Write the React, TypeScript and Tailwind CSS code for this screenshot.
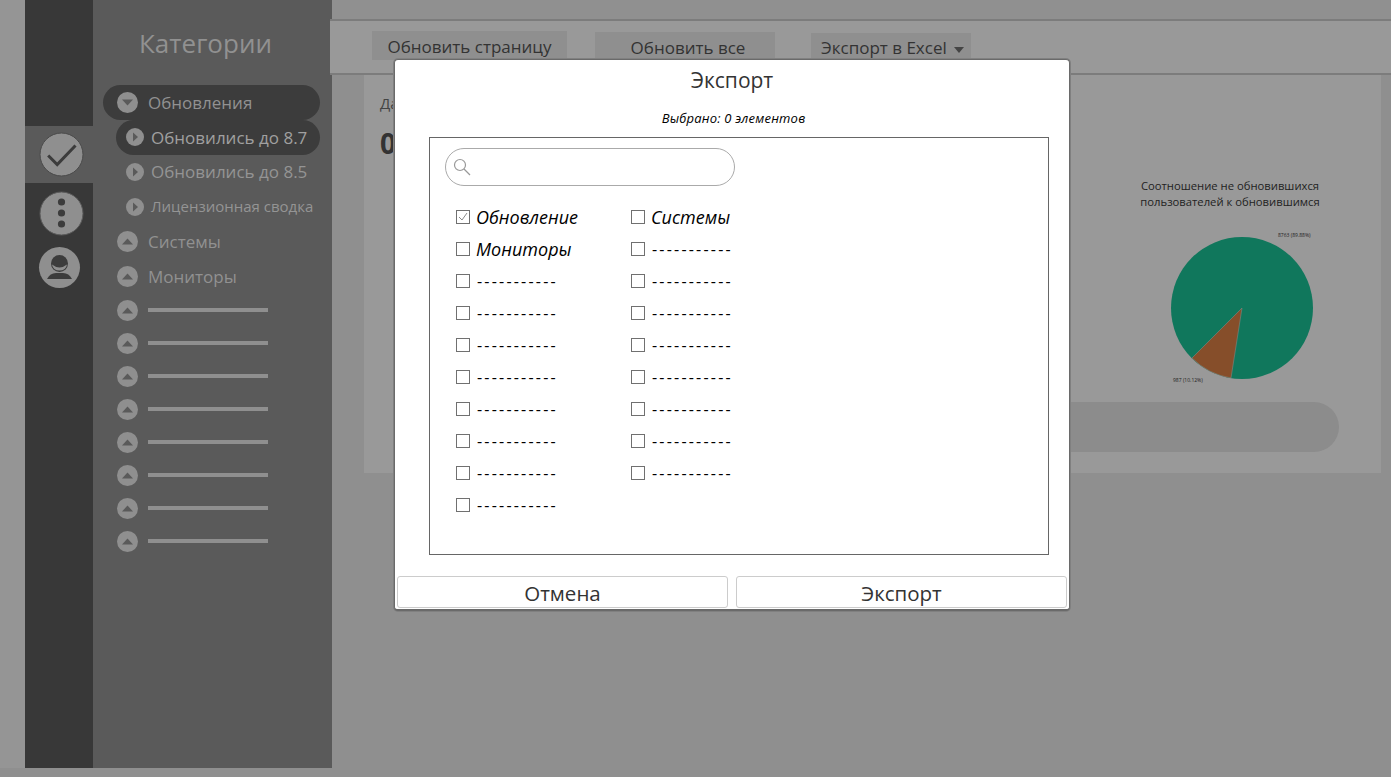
const font = { fontFamily: '"Open Sans", "Noto Sans", sans-serif' };

function Circle({ size, dir }: { size: number; dir: "up" | "down" | "right" }) {
  const r = size / 2;
  const points =
    dir === "up"
      ? `${r - 5.5},${r + 3} ${r + 5.5},${r + 3} ${r},${r - 3}`
      : dir === "down"
      ? `${r - 5.5},${r - 3} ${r + 5.5},${r - 3} ${r},${r + 3}`
      : `${r - 2},${r - 4.5} ${r - 2},${r + 4.5} ${r + 3},${r}`;
  return (
    <svg width={size} height={size} className="shrink-0">
      <circle cx={r} cy={r} r={r} fill="#8f8f8f" />
      <polygon points={points} fill="#5a5a5a" />
    </svg>
  );
}

function SideRow({ label, open }: { label: string; open?: boolean }) {
  return (
    <div className={`flex items-center h-[34.75px] w-[217px] pl-[14px] gap-[10px] rounded-full text-[17px] ${open ? "bg-[#3c3c3c]" : ""}`}>
      <Circle size={21} dir={open ? "down" : "up"} />
      <span className="text-[#919191] leading-none">{label}</span>
    </div>
  );
}

function SubRow({ label, active, small }: { label: string; active?: boolean; small?: boolean }) {
  return (
    <div className={`flex items-center h-[34.75px] w-[204px] ml-[13px] pl-[10px] gap-[7px] rounded-full ${small ? "text-[15px]" : "text-[17px]"} ${active ? "bg-[#3c3c3c]" : ""}`}>
      <Circle size={18} dir="right" />
      <span className={`leading-none whitespace-nowrap ${active ? "text-[#a0a0a0]" : "text-[#949494]"}`}>{label}</span>
    </div>
  );
}

function LineRow() {
  return (
    <div className="flex items-center h-[33px] w-[217px] pl-[14px] gap-[10px]">
      <Circle size={21} dir="up" />
      <div className="w-[120px] h-[4px] bg-[#8f8f8f]" />
    </div>
  );
}

function Rail() {
  return (
    <div className="w-[68px] h-full bg-[#383838] flex flex-col pt-[126px]">
      <div className="h-[57px] bg-[#5a5a5a] flex items-center justify-center pl-[4px]">
        <svg width="45" height="45" viewBox="0 0 45 45">
          <circle cx="22.5" cy="22.5" r="21.5" fill="#8f8f8f" stroke="#4a4a4a" strokeWidth="1" />
          <path d="M9.2 23.5l9 9 18.3-19" fill="none" stroke="#3c3c3c" strokeWidth="3" />
        </svg>
      </div>
      <div className="h-[60px] flex items-center justify-center pl-[4px]">
        <svg width="45" height="45" viewBox="0 0 45 45">
          <circle cx="22.5" cy="22.5" r="21.5" fill="#8f8f8f" stroke="#5a5a5a" strokeWidth="1" />
          <circle cx="22.5" cy="11" r="3.6" fill="#3c3c3c" />
          <circle cx="22.5" cy="22" r="3.6" fill="#3c3c3c" />
          <circle cx="22.5" cy="33" r="3.6" fill="#3c3c3c" />
        </svg>
      </div>
      <div className="h-[48px] flex items-center pl-[13px]">
        <svg width="43" height="41" viewBox="0 0 43 41">
          <circle cx="21.5" cy="20.5" r="20.5" fill="#8f8f8f" />
          <circle cx="21.5" cy="16.5" r="8.5" fill="#3c3c3c" />
          <path d="M14 17.5q7.5 6 15 0q-1 6-7.5 6t-7.5-6z" fill="#8f8f8f" />
          <path d="M9 32q3-6 9-6h7q6 0 9 6z" fill="#3c3c3c" />
        </svg>
      </div>
    </div>
  );
}

function Sidebar() {
  const lines = [0, 1, 2, 3, 4, 5, 6, 7];
  return (
    <div className="w-[239px] h-full bg-[#5a5a5a] flex flex-col pl-[10px]">
      <div className="h-[85px] pt-[23px] pl-[36px] text-[26px] leading-[40px] text-[#919191]">Категории</div>
      <SideRow label="Обновления" open />
      <SubRow label="Обновились до 8.7" active />
      <SubRow label="Обновились до 8.5" />
      <SubRow label="Лицензионная сводка" small />
      <SideRow label="Системы" />
      <SideRow label="Мониторы" />
      {lines.map((i) => (
        <LineRow key={i} />
      ))}
    </div>
  );
}

function Pie() {
  return (
    <svg width="220" height="160" viewBox="0 0 220 160" className="shrink-0">
      <circle cx="112" cy="78" r="71" fill="#10775c" />
      <path d="M112 78L62 128A71 71 0 0 0 101 148Z" fill="#864e2a" stroke="#8d8d8d" strokeWidth="0.5" />
      <text x="148" y="7" fontSize="5" fill="#222222">8763 (89.88%)</text>
      <text x="43" y="152" fontSize="5" fill="#222222">987 (10.12%)</text>
    </svg>
  );
}

function Main() {
  return (
    <div className="flex-1 -ml-[2px] flex flex-col h-full">
      <div className="h-[19px] ml-[2px] bg-[#909090]" />
      <div className="h-[56px] bg-[#999999] border-y-2 border-[#7c7c7c] flex items-start pl-[42px] pt-[10px] text-[17px] text-[#333333] whitespace-nowrap">
        <div className="w-[195px] h-[29px] bg-[#8f8f8f] flex items-center justify-center pt-[2px]">Обновить страницу</div>
        <div className="w-[180px] h-[29px] ml-[28px] mt-[1px] bg-[#8f8f8f] flex items-center justify-center pt-[2px] pl-[6px]">Обновить все</div>
        <div className="w-[160px] h-[28px] ml-[36px] mt-[2px] bg-[#8f8f8f] flex items-center pl-[10px] gap-[7px] pt-[2px]">
          Экспорт в Excel
          <svg width="10" height="6" className="mt-[4px]"><polygon points="0,0 10,0 5,6" fill="#444444" /></svg>
        </div>
      </div>
      <div className="flex-1 ml-[2px] pl-[32px] pr-[10px]">
        <div className="h-[398px] bg-[#999999] pl-[16px] pr-[42px] pt-[18px] flex flex-col">
          <div className="flex justify-between">
            <div>
              <div className="text-[15px] leading-[20px] text-[#444444]">Данные</div>
              <div className="mt-[14px] text-[28px] leading-[32px] font-bold text-[#333333]">0</div>
            </div>
            <div className="flex flex-col items-center mt-[85px] mr-[-11px]">
              <div className="w-[220px] text-center text-[11.25px] leading-[16px] text-[#222222] -ml-[20px]">
                Соотношение не обновившихся пользователей к обновившимся
              </div>
              <div className="mt-[20px]"><Pie /></div>
            </div>
          </div>
          <div className="mt-[12px] ml-[100px] h-[50px] rounded-full bg-[#8c8c8c]" />
        </div>
      </div>
    </div>
  );
}

function CheckItem({ label, checked, strong }: { label: string; checked?: boolean; strong?: boolean }) {
  return (
    <div className={`flex items-center h-[32px] ${strong ? "gap-[6px]" : "gap-[7px]"}`}>
      <svg width="14" height="14" className="shrink-0">
        <rect x="0.5" y="0.5" width="13" height="13" fill="#ffffff" stroke="#707070" />
        {checked && <path d="M3 7l3 3 5-7" fill="none" stroke="#8a8a8a" strokeWidth="1" />}
      </svg>
      {strong ? (
        <span className="italic text-[18px] leading-none text-black">{label}</span>
      ) : (
        <span className="text-[16px] leading-none text-black tracking-[2.2px]">{label}</span>
      )}
    </div>
  );
}

function ExportModal() {
  const dash = "-----------";
  const left = [0, 1, 2, 3, 4, 5, 6, 7];
  const right = [0, 1, 2, 3, 4, 5, 6, 7];
  return (
    <div className="absolute left-[394px] top-[59px] w-[676px] h-[552px] bg-white border border-b-2 border-[#6a6a6a] rounded-[4px] shadow-[0_0_0_1px_#808080] flex flex-col items-center">
      <div className="h-[41px] pt-[5px] text-[21px] leading-[30px] text-[#333333]">Экспорт</div>
      <div className="h-[36px] pt-[8px] pl-[3px] text-[13px] leading-[18px] italic text-black tracking-[0.2px]">Выбрано: 0 элементов</div>
      <div className="w-[620px] h-[418px] ml-[14px] border border-[#666666] pt-[10px] pl-[15px]">
        <div className="w-[290px] h-[38px] rounded-full border border-[#aaaaaa] flex items-center pl-[7px]">
          <svg width="18" height="18" viewBox="0 0 18 18" fill="none" stroke="#999999" strokeWidth="1.2">
            <circle cx="7" cy="7" r="5.5" />
            <path d="M11 11l6 6" />
          </svg>
        </div>
        <div className="flex mt-[15px] pl-[11px]">
          <div className="w-[175px] flex flex-col">
            <CheckItem label="Обновление" checked strong />
            <CheckItem label="Мониторы" strong />
            {left.map((i) => (
              <CheckItem key={i} label={dash} />
            ))}
          </div>
          <div className="flex flex-col">
            <CheckItem label="Системы" strong />
            {right.map((i) => (
              <CheckItem key={i} label={dash} />
            ))}
          </div>
        </div>
      </div>
      <div className="mt-[21px] flex gap-[8px]">
        <button type="button" className="w-[331px] h-[32px] pt-[2px] border border-[#cccccc] rounded-[3px] text-[20.5px] leading-none text-[#333333]">Отмена</button>
        <button type="button" className="w-[331px] h-[32px] pt-[2px] border border-[#cccccc] rounded-[3px] text-[20.5px] leading-none text-[#333333]">Экспорт</button>
      </div>
    </div>
  );
}

export default function App() {
  return (
    <div className="relative w-[1391px] h-[777px] overflow-hidden bg-[#8f8f8f]" style={font}>
      <div className="flex h-[768px]">
        <div className="w-[25px] bg-[#959595]" />
        <Rail />
        <Sidebar />
        <Main />
      </div>
      <ExportModal />
    </div>
  );
}
